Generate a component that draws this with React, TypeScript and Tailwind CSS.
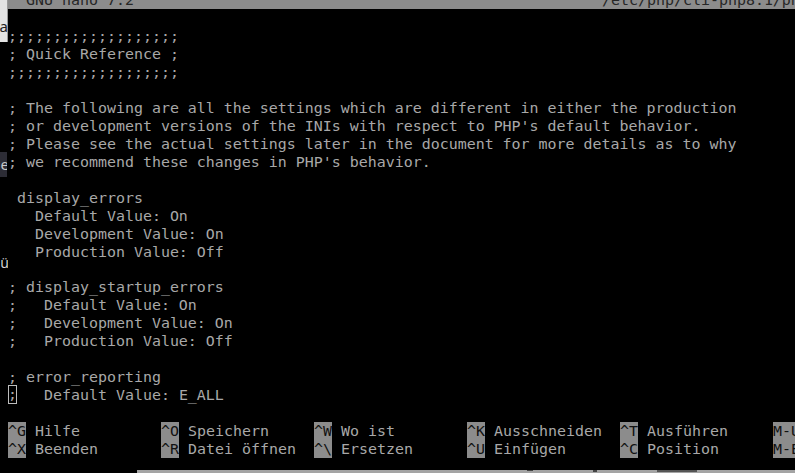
import React from 'react';

const lines = [
  '',
  ';;;;;;;;;;;;;;;;;;;',
  '; Quick Reference ;',
  ';;;;;;;;;;;;;;;;;;;',
  '',
  '; The following are all the settings which are different in either the production',
  "; or development versions of the INIs with respect to PHP's default behavior.",
  '; Please see the actual settings later in the document for more details as to why',
  "; we recommend these changes in PHP's behavior.",
  '',
  ' display_errors',
  '   Default Value: On',
  '   Development Value: On',
  '   Production Value: Off',
  '',
  '; display_startup_errors',
  ';   Default Value: On',
  ';   Development Value: On',
  ';   Production Value: Off',
  '',
  '; error_reporting',
];

const shortcuts = [
  [
    ['^G', 'Hilfe'],
    ['^O', 'Speichern'],
    ['^W', 'Wo ist'],
    ['^K', 'Ausschneiden'],
    ['^T', 'Ausführen'],
    ['M-U', 'Rückgängig'],
  ],
  [
    ['^X', 'Beenden'],
    ['^R', 'Datei öffnen'],
    ['^\\', 'Ersetzen'],
    ['^U', 'Einfügen'],
    ['^C', 'Position'],
    ['M-E', 'Wiederholen'],
  ],
];

const Row = ({ children }: { children?: React.ReactNode }) => (
  <div className="h-[18px] leading-[18px] whitespace-pre">{children}</div>
);

const App = () => {
  return (
    <div className="w-[795px] h-[473px] overflow-hidden bg-black flex">
      {/* strip of the window behind, on the left edge */}
      <div className="w-[8px] shrink-0 flex flex-col font-['Noto_Sans',sans-serif] text-[15px]">
        <div className="h-[42px] bg-[#e4e4e4] border-r border-[#9a9a9a] flex items-end justify-end pb-[8px] overflow-hidden">
          <span className="text-[#222] leading-none -mr-[1px]">a</span>
        </div>
        <div className="h-[110px]" />
        <div className="h-[25px] w-[7px] bg-[#2c2c35] flex items-center justify-end overflow-hidden">
          <span className="text-[#c8c8c8] leading-none -mr-[2px]">e</span>
        </div>
        <div className="h-[78px]" />
        <div className="h-[16px] flex items-center justify-end overflow-hidden">
          <span className="text-[#d0d0d0] leading-none -mr-[1px] text-[14px]">ü</span>
        </div>
      </div>

      <div className="flex-1 flex flex-col -mt-[9px] font-['DejaVu_Sans_Mono',monospace] text-[14.95px] text-[#a8a8a8] overflow-hidden">
        <div className="h-[18px] leading-[18px] bg-[#8c8c8c] text-[#262626] whitespace-pre flex">
          <span className="w-[594px] shrink-0">  GNU nano 7.2</span>
          <span>/etc/php/cli-php8.1/php.ini</span>
        </div>
        {lines.map((l, i) => (
          <Row key={i}>{l}</Row>
        ))}
        <Row>
          <span className="inline-block h-[19px] -mt-[1px] outline outline-1 outline-[#bdbdbd] -outline-offset-1 align-top">;</span>
          {'   Default Value: E_ALL'}
        </Row>
        <Row />
        {shortcuts.map((row, r) => (
          <div key={r} className="h-[18px] leading-[18px] flex whitespace-pre">
            {row.map(([k, label]) => (
              <div key={k} className="w-[153px] shrink-0 flex">
                <span className="bg-[#8c8c8c] text-[#111]">{k}</span>
                <span> {label}</span>
              </div>
            ))}
          </div>
        ))}
        <div className="h-[12px]" />
        <div className="h-[3px] ml-[129px] bg-[#a4a4a4] flex items-start gap-[60px] pl-[390px]">
          <span className="w-[6px] h-[1px] bg-[#444]" />
          <span className="w-[4px] h-[2px] bg-[#444]" />
          <span className="w-[40px] h-[2px] bg-[#555]" />
        </div>
      </div>
    </div>
  );
};

export default App;
